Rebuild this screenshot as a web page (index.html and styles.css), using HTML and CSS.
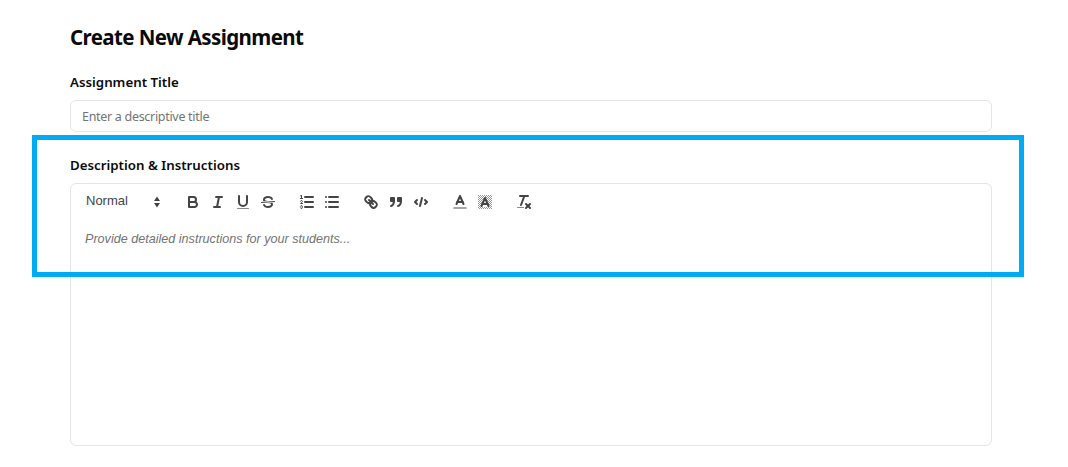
FILE: index.html
```html
<!DOCTYPE html>
<html lang="en">
  <head>
    <meta charset="UTF-8" />
    <title>Create New Assignment</title>
    <link rel="stylesheet" href="styles.css">
  </head>
  <body>
    <div class="page">
      <h1>Create New Assignment</h1>

      <label class="field-label">Assignment Title</label>
      <input class="text-input" type="text" placeholder="Enter a descriptive title" />

      <label class="field-label desc-label">Description &amp; Instructions</label>
      <div class="editor">
        <div class="toolbar">
          <span class="picker">
            <span>Normal</span>
            <svg viewBox="0 0 18 18"><polygon class="fill" points="6,8 12,8 9,3.5"></polygon><polygon class="fill" points="6,10 12,10 9,14.5"></polygon></svg>
          </span>

          <span class="group">
            <button><svg viewBox="0 0 18 18"><path class="stroke" d="M5,4H9.5A2.5,2.5,0,0,1,12,6.5v0A2.5,2.5,0,0,1,9.5,9H5V4Z"></path><path class="stroke" d="M5,9h5.5A2.5,2.5,0,0,1,13,11.5v0A2.5,2.5,0,0,1,10.5,14H5V9Z"></path></svg></button>
            <button><svg viewBox="0 0 18 18"><line class="stroke" x1="7" x2="13" y1="4" y2="4"></line><line class="stroke" x1="5" x2="11" y1="14" y2="14"></line><line class="stroke" x1="8" x2="10" y1="14" y2="4"></line></svg></button>
            <button><svg viewBox="0 0 18 18"><path class="stroke" d="M5,3V9a4.012,4.012,0,0,0,4,4H9a4.012,4.012,0,0,0,4-4V3"></path><rect class="fill soft" height="1" rx="0.5" ry="0.5" width="12" x="3" y="15"></rect></svg></button>
            <button><svg viewBox="0 0 18 18"><line class="stroke thin" x1="15.5" x2="2.5" y1="8.5" y2="9.5"></line><path class="fill" d="M9.007,8C6.542,7.791,6,7.519,6,6.5,6,5.792,7.283,5,9,5c1.571,0,2.765.679,2.969,1.309a1,1,0,0,0,1.9-.617C13.356,4.106,11.354,3,9,3,6.2,3,4,4.538,4,6.5a3.2,3.2,0,0,0,.5,1.843Z"></path><path class="fill" d="M8.984,10C11.457,10.208,12,10.479,12,11.5c0,.708-1.283,1.5-3,1.5-1.571,0-2.765-.679-2.969-1.309a1,1,0,1,0-1.9.617C4.644,13.894,6.646,15,9,15c2.8,0,5-1.538,5-3.5a3.2,3.2,0,0,0-.5-1.843Z"></path></svg></button>
          </span>

          <span class="group">
            <button><svg viewBox="0 0 18 18"><line class="stroke" x1="7" x2="15" y1="4" y2="4"></line><line class="stroke" x1="7" x2="15" y1="9" y2="9"></line><line class="stroke" x1="7" x2="15" y1="14" y2="14"></line><line class="stroke thin" x1="2.5" x2="4.5" y1="5.5" y2="5.5"></line><path class="fill" d="M3.5,6A0.5,0.5,0,0,1,3,5.5V3.085l-0.276.138A0.5,0.5,0,0,1,2.053,3c-0.124-.247-0.023-0.324.224-0.447l1-.5A0.5,0.5,0,0,1,4,2.5v3A0.5,0.5,0,0,1,3.5,6Z"></path><path class="stroke thin" d="M4.5,10.5h-2c0-.234,1.85-1.076,1.85-2.234A0.959,0.959,0,0,0,2.5,8.156"></path><path class="stroke thin" d="M2.5,14.846a0.959,0.959,0,0,0,1.85-.109A0.7,0.7,0,0,0,3.75,14a0.688,0.688,0,0,0,.6-0.736,0.959,0.959,0,0,0-1.85-.109"></path></svg></button>
            <button><svg viewBox="0 0 18 18"><line class="stroke" x1="6" x2="15" y1="4" y2="4"></line><line class="stroke" x1="6" x2="15" y1="9" y2="9"></line><line class="stroke" x1="6" x2="15" y1="14" y2="14"></line><line class="stroke" x1="3" x2="3" y1="4" y2="4"></line><line class="stroke" x1="3" x2="3" y1="9" y2="9"></line><line class="stroke" x1="3" x2="3" y1="14" y2="14"></line></svg></button>
          </span>

          <span class="group">
            <button><svg viewBox="0 0 18 18"><line class="stroke" x1="7" x2="11" y1="7" y2="11"></line><path class="stroke" d="M8.9,4.577a3.476,3.476,0,0,1,.36,4.679A3.476,3.476,0,0,1,4.577,8.9C3.185,7.5,2.035,6.4,4.217,4.217S7.5,3.185,8.9,4.577Z"></path><path class="stroke" d="M13.423,9.1a3.476,3.476,0,0,0-4.679-.36,3.476,3.476,0,0,0,.36,4.679c1.392,1.392,2.5,2.542,4.679.36S14.815,10.5,13.423,9.1Z"></path></svg></button>
            <button><svg viewBox="0 0 18 18"><rect class="fill stroke" height="3" width="3" x="4" y="5"></rect><rect class="fill stroke" height="3" width="3" x="11" y="5"></rect><path class="stroke" d="M7,8c0,4.031-3,5-3,5"></path><path class="stroke" d="M14,8c0,4.031-3,5-3,5"></path></svg></button>
            <button><svg viewBox="0 0 18 18"><polyline class="stroke" points="5 7 3 9 5 11"></polyline><polyline class="stroke" points="13 7 15 9 13 11"></polyline><line class="stroke" x1="10" x2="8" y1="5" y2="13"></line></svg></button>
          </span>

          <span class="group">
            <button><svg viewBox="0 0 18 18"><line class="stroke label-line" x1="3" x2="15" y1="15" y2="15"></line><polyline class="stroke" points="5.5 11 9 3 12.5 11"></polyline><line class="stroke" x1="11.63" x2="6.38" y1="9" y2="9"></line></svg></button>
            <button><svg viewBox="0 0 18 18"><defs><pattern id="dots" width="2" height="2" patternUnits="userSpaceOnUse"><rect class="fill" width="1" height="1"></rect><rect class="fill" x="1" y="1" width="1" height="1"></rect></pattern></defs><rect class="dither" fill="url(#dots)" x="2" y="2" width="14" height="14"></rect><polygon fill="#fff" points="9,3.5 13.5,14 4.5,14"></polygon><polyline class="stroke" points="5.5 13 9 5 12.5 13"></polyline><line class="stroke" x1="11.63" x2="6.38" y1="11" y2="11"></line></svg></button>
          </span>

          <span class="group">
            <button><svg viewBox="0 0 18 18"><line class="stroke" x1="5" x2="13" y1="3" y2="3"></line><line class="stroke" x1="6" x2="9.35" y1="12" y2="3"></line><line class="stroke" x1="11" x2="15" y1="11" y2="15"></line><line class="stroke" x1="15" x2="11" y1="11" y2="15"></line><rect class="fill soft" height="1" rx="0.5" ry="0.5" width="7" x="2" y="14"></rect></svg></button>
          </span>
        </div>
        <p class="editor-body">Provide detailed instructions for your students...</p>
      </div>

      <!-- annotation drawn over the screenshot -->
      <div class="highlight"></div>
    </div>
  </body>
</html>
```

FILE: styles.css
```css
* {
  box-sizing: border-box;
}

body {
  margin: 0;
  background: #fff;
  color: #0a0a0a;
  font-family: "Noto Sans", sans-serif;
}

.page {
  position: relative;
  height: 467px;
  overflow: hidden;
  padding: 21px 76px 0 70px;
}

h1 {
  margin: 0 0 19px;
  font-size: 20.5px;
  line-height: 32px;
  font-weight: 700;
  letter-spacing: -0.6px;
}

.field-label {
  display: block;
  margin-bottom: 8px;
  font-size: 13.3px;
  line-height: 20px;
  font-weight: 600;
}

.desc-label {
  margin-top: 23px;
}

.text-input {
  display: block;
  width: 100%;
  height: 32px;
  padding: 0 11px;
  border: 1px solid #e5e5e5;
  border-radius: 6px;
  background: #fff;
  font-family: "Noto Sans", sans-serif;
  font-size: 12.5px;
  letter-spacing: -0.3px;
  outline: none;
}

.text-input::placeholder {
  color: #737373;
  opacity: 1;
}

.editor {
  height: 263px;
  border: 1px solid #e5e5e5;
  border-radius: 6px;
}

.toolbar {
  display: flex;
  align-items: center;
  height: 36px;
  padding: 0 0 0 7px;
}

.picker {
  display: flex;
  align-items: center;
  justify-content: space-between;
  width: 87px;
  margin-right: 15px;
  padding-left: 8px;
  color: #444;
  font-family: "Liberation Sans", sans-serif;
  font-size: 13px;
}

.picker span {
  position: relative;
  top: -2px;
}

.picker svg {
  width: 18px;
  height: 18px;
  margin-right: -1px;
}

.group {
  display: flex;
  margin-right: 14px;
}

.group button {
  display: flex;
  align-items: center;
  justify-content: center;
  width: 25px;
  height: 24px;
  padding: 0;
  border: none;
  background: none;
}

.group svg {
  width: 18px;
  height: 18px;
  flex: none;
}

.stroke {
  fill: none;
  stroke: #444;
  stroke-width: 2;
  stroke-linecap: round;
  stroke-linejoin: round;
}

.stroke.thin {
  stroke-width: 1;
}

.stroke.label-line {
  stroke: #888;
  stroke-width: 1.5;
}

.fill {
  fill: #444;
}

.fill.soft {
  fill: #888;
}

.dither {
  opacity: 0.55;
}

.editor-body {
  margin: 0;
  padding: 9px 14px;
  color: #737373;
  font-family: "Liberation Sans", sans-serif;
  font-size: 12.6px;
  font-style: italic;
  line-height: 20px;
}

.highlight {
  position: absolute;
  left: 32px;
  top: 135px;
  width: 992px;
  height: 142px;
  border: 5px solid #00abf3;
  pointer-events: none;
}
```
